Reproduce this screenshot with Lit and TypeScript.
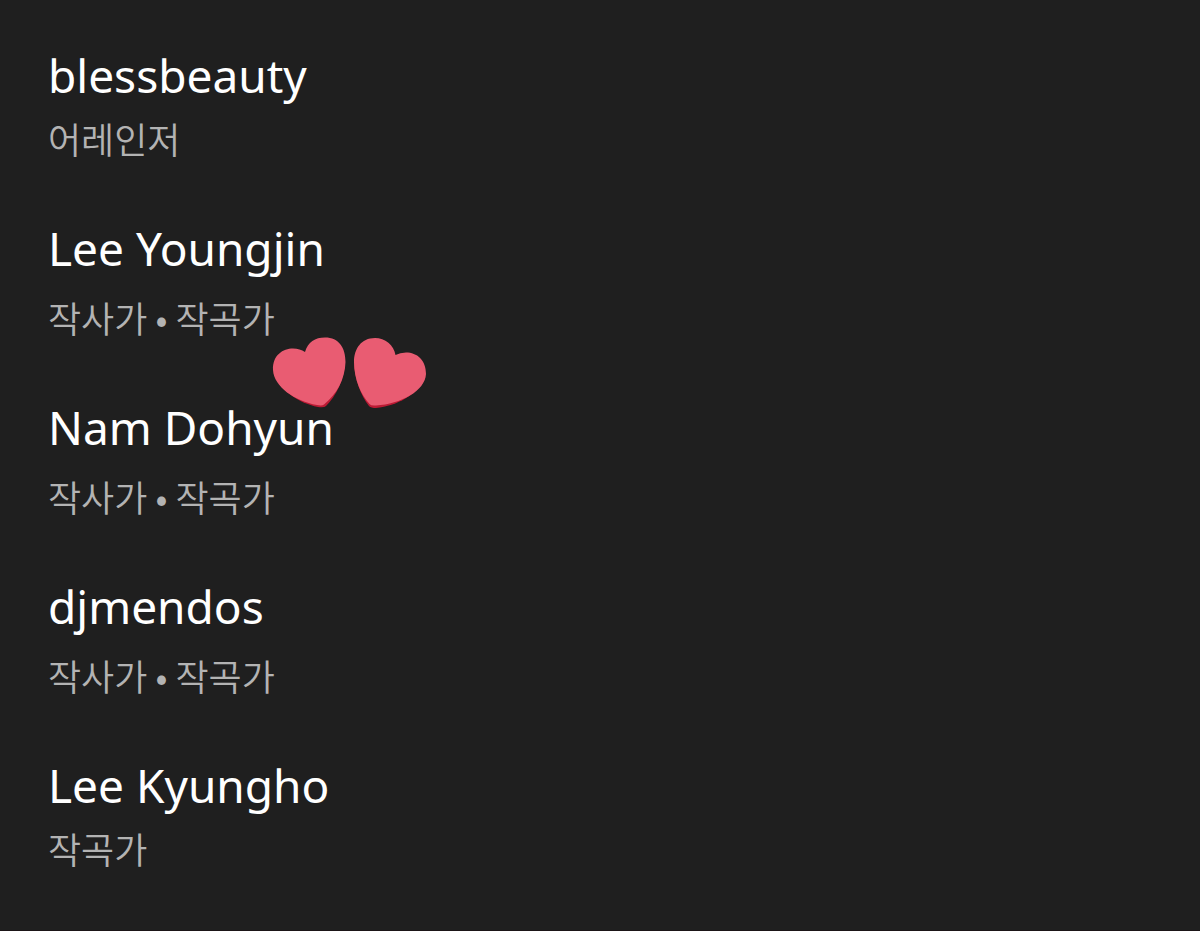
import { LitElement, html, css } from "lit";
import { customElement } from "lit/decorators.js";

interface Credit {
  name: string;
  roles: string[];
  liked?: boolean;
}

const credits: Credit[] = [
  { name: "blessbeauty", roles: ["어레인저"] },
  { name: "Lee Youngjin", roles: ["작사가", "작곡가"], liked: true },
  { name: "Nam Dohyun", roles: ["작사가", "작곡가"] },
  { name: "djmendos", roles: ["작사가", "작곡가"] },
  { name: "Lee Kyungho", roles: ["작곡가"] },
];

@customElement("app-root")
export class AppRoot extends LitElement {
  static styles = css`
    :host {
      display: block;
      box-sizing: border-box;
      min-height: 100vh;
      padding: 45px 48px;
      background: #1f1f1f;
      border-bottom: 1px solid #1b1517;
      font-family: "Noto Sans", "Noto Sans CJK KR", sans-serif;
    }
    .list {
      list-style: none;
      margin: 0;
      padding: 0;
      display: flex;
      flex-direction: column;
      gap: 56px;
    }
    .name {
      margin: 0;
      font-size: 46px;
      line-height: 60px;
      font-weight: 400;
      color: #fff;
    }
    .roles {
      position: relative;
      width: fit-content;
      margin: 15px 0 0;
      font-family: "Noto Sans CJK KR", sans-serif;
      font-size: 36px;
      line-height: 48px;
      font-weight: 350;
      color: #b3b3b3;
    }
    .single {
      margin-top: 9px;
    }
    .hearts {
      position: absolute;
      left: 100%;
      top: 100%;
      width: 160px;
      height: 76px;
      margin: -7px 0 0 -5px;
    }
  `;

  private hearts() {
    return html`<svg class="hearts" viewBox="270 334 160 76" aria-hidden="true">
      <path fill="#bb1a34" d="M345 363C344 380 336 396 326 406Q324 408 318 407C298 403 280 390 274 374Z" />
      <path fill="#e95c72" d="M305 352C308 342 315 337.500 325 337.500C339 337.500 345.500 348 345.500 362C345 379 337 394 324 404.500Q322 406 317 405C295 401 274 387 273 370C272.500 355 283 348.500 293 348.500Q300 348.500 305 352Z" />
      <path fill="#bb1a34" d="M354 363C355 380 361 396 369 406Q371 408 376 408C397 406 418 394 425 378Z" />
      <path fill="#e95c72" d="M395.500 355C394 345 385 338 375 338C361 338 354 349 354 362C354 379 361 395 369.500 404Q371 406 376 405.500C401 404 425 391 426 374C426 360 417 352.500 406 352.500Q400 352.500 395.500 355Z" />
    </svg>`;
  }

  render() {
    return html`<ul class="list">
      ${credits.map(
        (c) => html`<li>
          <h2 class="name">${c.name}</h2>
          <p class="roles ${c.roles.length === 1 ? "single" : ""}">${c.roles.join(" • ")}${c.liked ? this.hearts() : ""}</p>
        </li>`,
      )}
    </ul>`;
  }
}
